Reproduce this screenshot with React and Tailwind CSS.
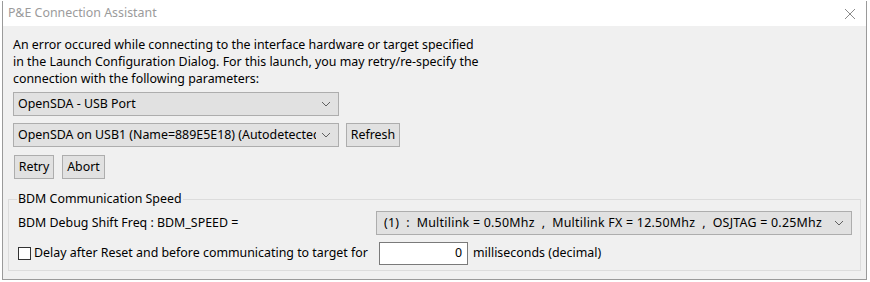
import React from "react";

const Chevron = () => (
  <svg width="10" height="6" viewBox="0 0 10 6" className="shrink-0">
    <path d="M1 1 L5 5 L9 1" fill="none" stroke="#606060" strokeWidth="1" />
  </svg>
);

const Combo = ({ value, className = "", pre = false }) => (
  <div
    className={`flex items-center h-[24px] border border-[#adadad] bg-[#e1e1e1] pl-[4px] pr-[7px] ${className}`}
  >
    <span
      className={`flex-1 overflow-hidden mr-[5px] ${pre ? "whitespace-pre tracking-[0.25px]" : "whitespace-nowrap"}`}
    >
      {value}
    </span>
    <Chevron />
  </div>
);

const Button = ({ children, className = "" }) => (
  <button
    className={`h-[24px] border border-[#adadad] bg-[#e1e1e1] leading-none text-center ${className}`}
  >
    {children}
  </button>
);

export default function App() {
  return (
    <div className="w-[870px] h-[282px] bg-white font-['Noto_Sans',sans-serif] text-[12.4px] text-black overflow-hidden">
      <div className="ml-[2px] mt-[1px] w-[865px] h-[279px] border border-[#9a9a9a] border-t-0 bg-[#f0f0f0] flex flex-col">
        <div className="h-[25px] bg-white flex items-center justify-between pl-[5px] pr-[10px]">
          <span className="text-[12.4px] text-[#9b9b9b]">P&amp;E Connection Assistant</span>
          <svg width="12" height="12" viewBox="0 0 12 12">
            <path d="M1 1 L11 11 M11 1 L1 11" stroke="#8a8a8a" strokeWidth="1" />
          </svg>
        </div>

        <div className="pl-[10px] pt-[10px] leading-[17px]">
          <p>An error occured while connecting to the interface hardware or target specified</p>
          <p>in the Launch Configuration Dialog. For this launch, you may retry/re-specify the</p>
          <p>connection with the following parameters:</p>
        </div>

        <div className="pl-[10px] mt-[5px] flex flex-col gap-[7px]">
          <Combo value="OpenSDA - USB Port" className="w-[326px]" />
          <div className="flex gap-[7px]">
            <Combo value="OpenSDA on USB1 (Name=889E5E18) (Autodetected)" className="w-[326px]" />
            <Button className="w-[54px]">Refresh</Button>
          </div>
          <div className="flex gap-[8px] pl-[1px] mt-[1px]">
            <Button className="w-[40px]">Retry</Button>
            <Button className="w-[43px]">Abort</Button>
          </div>
        </div>

        <fieldset className="mx-[5px] mt-[12px] border border-[#dcdcdc] pl-[9px] pr-[8px] pb-[5px]">
          <legend className="px-[1px] -ml-[1px] leading-[16px]">BDM Communication Speed</legend>
          <div className="flex items-center justify-between mt-[4px]">
            <span>BDM Debug Shift Freq : BDM_SPEED =</span>
            <Combo
              pre
              value="(1)  :  Multilink = 0.50Mhz  ,  Multilink FX = 12.50Mhz  ,  OSJTAG = 0.25Mhz"
              className="w-[476px] pl-[7px]"
            />
          </div>
          <div className="flex items-center mt-[7px]">
            <span className="w-[13px] h-[13px] border border-[#333] bg-white mr-[3px]" />
            <span className="w-[345px]">Delay after Reset and before communicating to target for</span>
            <div className="w-[89px] h-[23px] border border-[#7a7a7a] bg-white flex items-center justify-end pr-[5px]">
              0
            </div>
            <span className="ml-[5px]">milliseconds (decimal)</span>
          </div>
        </fieldset>
      </div>
    </div>
  );
}
